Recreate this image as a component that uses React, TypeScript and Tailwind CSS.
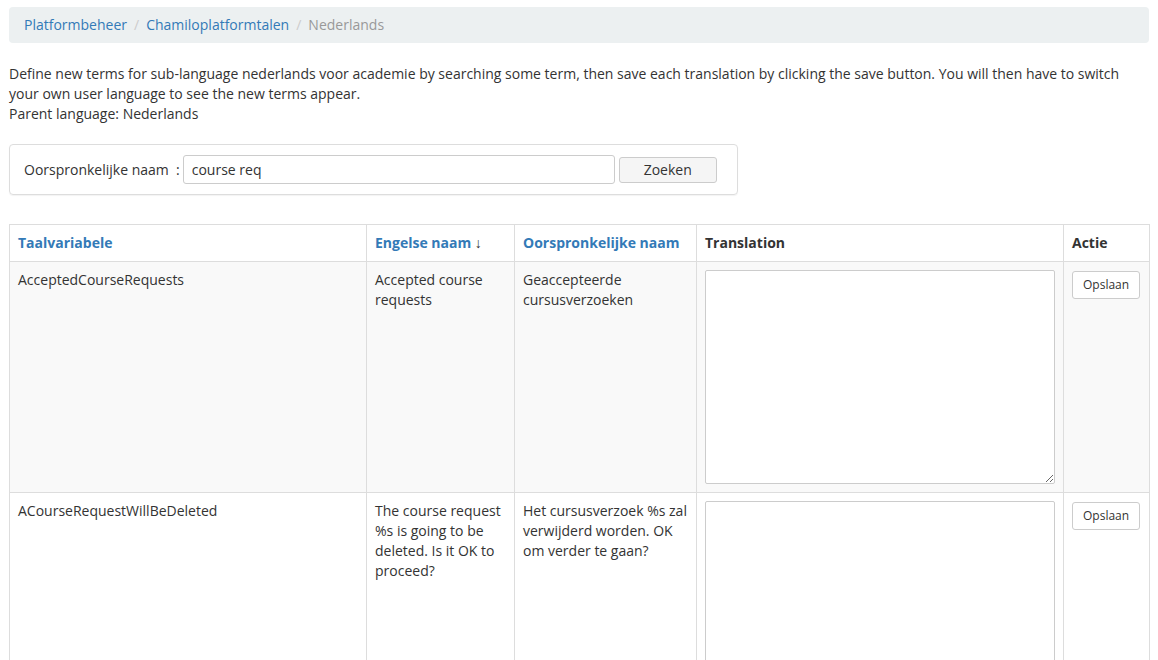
import React from "react";

const font = { fontFamily: '"Open Sans", "Liberation Sans", sans-serif' };

function Row({ v, en, orig, striped }: { v: string; en: string; orig: string; striped?: boolean }) {
  const bg = striped ? "bg-[#f9f9f9]" : "bg-white";
  return (
    <tr className={bg}>
      <td className="border border-[#dddddd] p-2 align-top">{v}</td>
      <td className="border border-[#dddddd] p-2 align-top">{en}</td>
      <td className="border border-[#dddddd] p-2 align-top">{orig}</td>
      <td className="border border-[#dddddd] p-2 align-top">
        <textarea className="block w-full h-[214px] border border-[#cccccc] bg-white rounded-[2px] resize-y"></textarea>
      </td>
      <td className="border border-[#dddddd] p-2 align-top">
        <button className="block h-[28px] px-[10px] text-[12px] text-[#333] bg-white border border-[#cccccc] rounded-[3px] mt-[1px]">
          Opslaan
        </button>
      </td>
    </tr>
  );
}

export default function App() {
  return (
    <div style={font} className="w-[1158px] min-h-[660px] bg-white text-[14px] leading-[20px] text-[#333333] px-[9px] pt-[7px]">
      <div className="h-[36px] bg-[#ecf0f1] rounded-[4px] flex items-center px-[15px]">
        <span className="text-[#337ab7]">Platformbeheer</span>
        <span className="text-[#cccccc] px-[7px]">/</span>
        <span className="text-[#337ab7]">Chamiloplatformtalen</span>
        <span className="text-[#cccccc] px-[7px]">/</span>
        <span className="text-[#999999]">Nederlands</span>
      </div>

      <div className="mt-[21px]">
        <p>
          Define new terms for sub-language nederlands voor academie by searching some term, then save each translation by clicking the save button. You will then have to switch your own user language to see the new terms appear.
        </p>
        <p>Parent language: Nederlands</p>
      </div>

      <div className="mt-[20px] w-[729px] h-[51px] border border-[#dddddd] rounded-[4px] shadow-[0_1px_1px_rgba(0,0,0,0.05)] flex items-center px-[14px]">
        <label className="mr-[3px]">Oorspronkelijke naam&nbsp; :</label>
        <input
          defaultValue="course req"
          className="w-[432px] h-[29px] border border-[#cccccc] rounded-[3px] px-[8px] text-[14px] text-[#333] outline-none"
          style={font}
        />
        <button className="ml-[4px] w-[98px] h-[26px] bg-[#f5f5f5] border border-[#cccccc] rounded-[3px] text-[14px] text-[#333]" style={font}>
          Zoeken
        </button>
      </div>

      <table className="mt-[29px] w-[1140px] border-collapse table-fixed">
        <colgroup>
          <col className="w-[357px]" />
          <col className="w-[148px]" />
          <col className="w-[182px]" />
          <col className="w-[367px]" />
          <col className="w-[86px]" />
        </colgroup>
        <thead>
          <tr className="bg-white">
            <th className="border border-[#dddddd] px-2 py-[8px] text-left font-bold text-[#337ab7] h-[37px]">Taalvariabele</th>
            <th className="border border-[#dddddd] px-2 py-[8px] text-left font-bold text-[#337ab7]">
              Engelse naam <span className="text-[#333]">↓</span>
            </th>
            <th className="border border-[#dddddd] px-2 py-[8px] text-left font-bold text-[#337ab7]">Oorspronkelijke naam</th>
            <th className="border border-[#dddddd] px-2 py-[8px] text-left font-bold text-[#333]">Translation</th>
            <th className="border border-[#dddddd] px-2 py-[8px] text-left font-bold text-[#333]">Actie</th>
          </tr>
        </thead>
        <tbody>
          <Row striped v="AcceptedCourseRequests" en="Accepted course requests" orig="Geaccepteerde cursusverzoeken" />
          <Row v="ACourseRequestWillBeDeleted" en="The course request %s is going to be deleted. Is it OK to proceed?" orig="Het cursusverzoek %s zal verwijderd worden. OK om verder te gaan?" />
        </tbody>
      </table>
    </div>
  );
}
